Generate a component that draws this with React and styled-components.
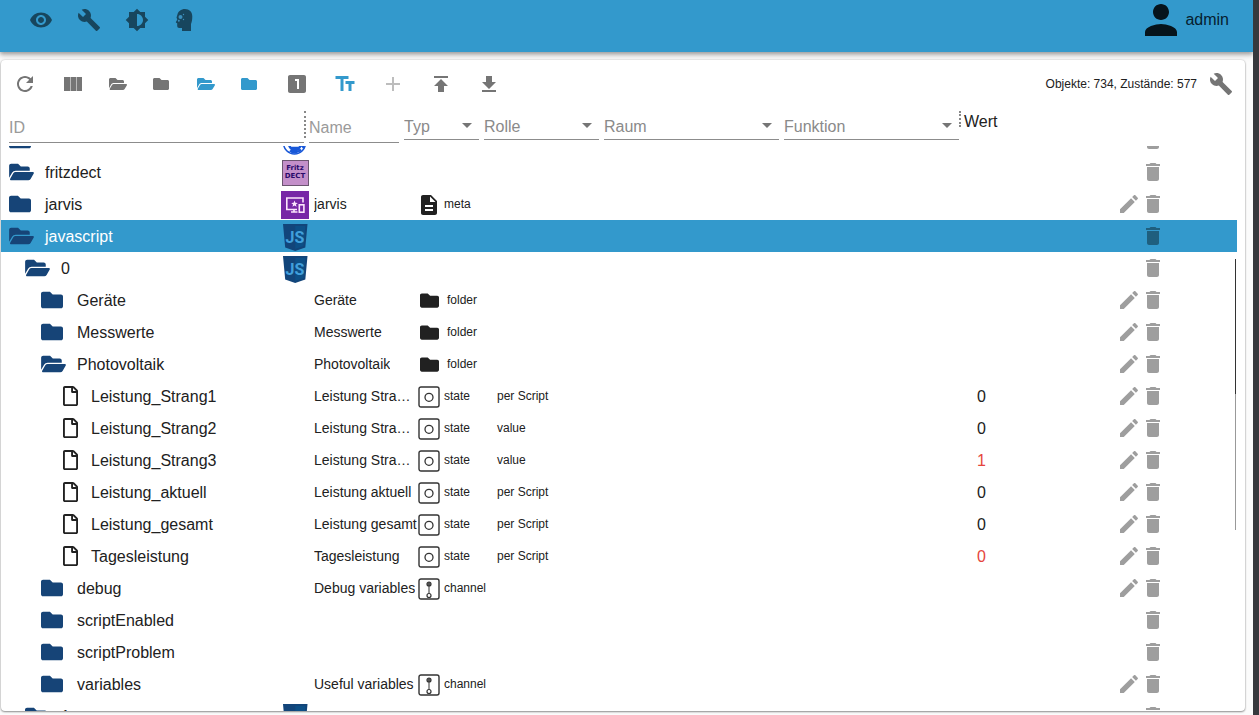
import React, { useLayoutEffect, useRef } from 'react'
import styled, { createGlobalStyle } from 'styled-components'

const GlobalStyle = createGlobalStyle`
* { box-sizing: border-box; }
body {
    margin: 0;
    background: #fbfbfb;
    color: #212121;
    font-family: "Liberation Sans", Arial, sans-serif;
}
`

const Page = styled.div`
display: flex;
height: 100vh;
overflow: hidden;
`

const Main = styled.div`
display: flex;
flex-direction: column;
flex: 1;
min-width: 0;
`

const Edge = styled.div`
width: 6px;
background: #37393d;
`

const Header = styled.header`
display: flex;
justify-content: space-between;
height: 52px;
padding: 0 24px 0 17px;
flex-shrink: 0;
background: #3399cc;
box-shadow: 0 2px 4px rgba(0, 0, 0, 0.3), 0 4px 6px rgba(0, 0, 0, 0.12);
`

const Icons = styled.div`
display: flex;
align-items: center;
height: 40px;
`

const User = styled.div`
display: flex;
align-items: center;
gap: 8px;
height: 40px;
font-size: 16px;
color: #06202f;

    svg {
        color: #06141c;
    }
`

const IconButton = styled.button`
display: flex;
align-items: center;
justify-content: ${(props) => (props.$narrow ? 'flex-start' : 'center')};
width: ${(props) => (props.$narrow ? 44 : 48)}px;
height: 40px;
padding: ${(props) => (props.$narrow ? '0 12px' : 0)};
border: none;
background: none;
color: ${(props) => props.$color || '#757575'};
cursor: pointer;
`

const Card = styled.section`
display: flex;
flex-direction: column;
flex: 1;
min-height: 0;
margin: 8px 8px 4px 1px;
overflow: hidden;
background: #fff;
border-radius: 4px;
box-shadow: 0 1px 2px rgba(0, 0, 0, 0.4), 0 0 2px rgba(0, 0, 0, 0.2);
`

const Toolbar = styled.div`
display: flex;
align-items: center;
justify-content: space-between;
height: 48px;
flex-shrink: 0;
`

const Counter = styled.span`
font-size: 12px;
`

const Table = styled.table`
position: relative;
display: flex;
flex-direction: column;
flex: 1;
min-height: 0;

    &::after {
        content: "";
        position: absolute;
        top: 25%;
        right: 9px;
        width: 1px;
        height: 45%;
        background: linear-gradient(#333 50%, #999 50%);
    }
`

const Head = styled.thead`
display: block;
`

const HeadRow = styled.tr`
display: grid;
grid-template-columns: 295px 90px 75px 115px 175px 175px 1fr;
gap: 5px;
height: 38px;
padding: 3px 8px 0;
`

const HeadCell = styled.th`
position: relative;
padding: ${(props) => (props.$label ? '2px 0 0' : 0)};
text-align: left;
font-weight: 400;
font-size: 16px;

    &::after {
        content: "";
        display: ${(props) => (props.$handle ? 'block' : 'none')};
        position: absolute;
        top: 0;
        right: -2px;
        height: ${(props) => props.$handle}px;
        border-right: 2px dotted #888;
    }
`

const TextFilter = styled.input`
display: block;
width: 100%;
height: 32px;
padding: 2px 0 0;
border: none;
border-bottom: 1px solid #8c8c8c;
border-radius: 0;
outline: none;
background: none;
font: inherit;

    &::placeholder {
        color: #9a9a9a;
        opacity: 1;
    }
`

const SelectFilter = styled.select`
display: block;
width: 100%;
height: 28px;
margin-top: 1px;
padding: 2px 0 0;
border: none;
border-bottom: 1px solid #8c8c8c;
border-radius: 0;
appearance: none;
background: none;
color: #8a8a8a;
font: inherit;
`

const Arrow = styled.svg`
position: absolute;
top: 12px;
right: 7px;
pointer-events: none;
`

const Body = styled.tbody`
display: block;
flex: 1;
min-height: 0;
margin-right: 8px;
overflow-y: auto;
scrollbar-width: none;
`

const Row = styled.tr`
display: grid;
grid-template-columns: 313px 104px 79px 120px 180px 180px 1fr 120px;
height: 32px;
background: ${(props) => (props.$selected ? '#3399cc' : 'transparent')};
color: ${(props) => (props.$selected ? '#fff' : 'inherit')};
`

const Cell = styled.td`
display: flex;
align-items: center;
min-width: 0;
padding: 0;
font-size: 12px;
`

const IdCell = styled(Cell)`
padding: 0 5px 0 ${(props) => 8 + props.$level * 16}px;
`

const NameCell = styled(Cell)`
font-size: 14px;
`

const ValueCell = styled(Cell)`
padding-top: 2px;
font-size: 16px;
color: ${(props) => (props.$alert ? '#e5453d' : 'inherit')};
`

const TreeIcon = styled.span`
display: flex;
width: ${(props) => (props.$file ? 34 : 36)}px;
padding-left: ${(props) => (props.$file ? 6 : 0)}px;
color: ${(props) => (props.$file ? '#212121' : '#164477')};
`

const IdText = styled.span`
flex: 1;
padding-top: 2px;
font-size: 16px;
`

const LogoBox = styled.span`
display: flex;
padding-top: 2px;
`

const NameText = styled.span`
overflow: hidden;
text-overflow: ellipsis;
white-space: nowrap;
`

const TypeIcon = styled.span`
display: flex;
width: ${(props) => (props.$folder ? 29 : 26)}px;
padding: ${(props) => (props.$folder ? '0 0 0 2px' : '2px 0 0')};
`

const ActionCell = styled(Cell)`
padding-left: ${(props) => (props.$edit ? 0 : 24)}px;
`

const ActionButton = styled.button`
display: flex;
padding: 0;
border: none;
background: none;
color: rgba(0, 0, 0, 0.38);
cursor: pointer;
`

const paths = {
    eye: 'M12 4.5C7 4.5 2.73 7.61 1 12c1.73 4.39 6 7.5 11 7.5s9.27-3.11 11-7.5c-1.73-4.39-6-7.5-11-7.5zM12 17c-2.76 0-5-2.24-5-5s2.24-5 5-5 5 2.24 5 5-2.24 5-5 5zm0-8c-1.66 0-3 1.34-3 3s1.34 3 3 3 3-1.34 3-3-1.34-3-3-3z',
    wrench: 'M22.7 19l-9.1-9.1c.9-2.3.4-5-1.5-6.9-2-2-5-2.4-7.4-1.3L9 6 6 9 1.6 4.7C.4 7.1.9 10.1 2.9 12.1c1.9 1.9 4.6 2.4 6.9 1.5l9.1 9.1c.4.4 1 .4 1.4 0l2.3-2.3c.5-.4.5-1.1.1-1.4z',
    brightness: 'M20 15.31L23.31 12 20 8.69V4h-4.69L12 .69 8.69 4H4v4.69L.69 12 4 15.31V20h4.69L12 23.31 15.31 20H20v-4.69zM12 18V6c3.31 0 6 2.69 6 6s-2.69 6-6 6z',
    person: 'M12 12c2.21 0 4-1.79 4-4s-1.79-4-4-4-4 1.79-4 4 1.79 4 4 4zm0 2c-2.67 0-8 1.34-8 4v2h16v-2c0-2.66-5.33-4-8-4z',
    refresh: 'M17.65 6.35C16.2 4.9 14.21 4 12 4c-4.42 0-7.99 3.58-7.99 8s3.57 8 7.99 8c3.73 0 6.84-2.55 7.73-6h-2.08c-.82 2.33-3.04 4-5.65 4-3.31 0-6-2.69-6-6s2.69-6 6-6c1.66 0 3.14.69 4.22 1.78L13 11h7V4l-2.35 2.35z',
    columns: 'M9 19h6V5H9.500v14zM3 19h6V5H3v14zM15.500 5v14H21V5h-5.500z',
    one: 'M19 3H5c-1.1 0-2 .9-2 2v14c0 1.1.9 2 2 2h14c1.1 0 2-.9 2-2V5c0-1.1-.9-2-2-2zm-5 14h-2V9h-2V7h4v10z',
    textFields: 'M2.5 4v3h5v12h3V7h5V4h-13zm19 5h-9v3h3v7h3v-7h3V9z',
    add: 'M19 13h-6v6h-2v-6H5v-2h6V5h2v6h6v2z',
    upload: 'M5 4v2h14V4H5zm0 10h4v6h6v-6h4l-7-7-7 7z',
    download: 'M19 10h-4V4H9v6H5l7 7 7-7zM5 18v2h14v-2H5z',
    meta: 'M14 2H6c-1.1 0-1.99.9-1.99 2L4 20c0 1.1.89 2 1.99 2H18c1.1 0 2-.9 2-2V8l-6-6zm2 16H8v-2h8v2zm0-4H8v-2h8v2zm-3-5V3.5L18.5 9H13z',
    edit: 'M3 17.25V21h3.75L17.81 9.94l-3.75-3.75L3 17.25zM20.71 7.04c.39-.39.39-1.02 0-1.41l-2.34-2.34c-.39-.39-1.02-.39-1.41 0l-1.83 1.83 3.75 3.75 1.83-1.83z',
    trash: 'M6 19c0 1.1.9 2 2 2h8c1.1 0 2-.9 2-2V7H6v12zM19 4h-3.5l-1-1h-5l-1 1H5v2h14V4z',
    file: 'M369.9 97.9L286 14C277 5 264.8 0 252.1 0H48C21.5 0 0 21.5 0 48v416c0 26.5 21.5 48 48 48h288c26.5 0 48-21.5 48-48V131.9c0-12.700-5.100-25-14.100-34zM332.100 128H256V51.900l76.100 76.100zM48 464V48h160v104c0 13.300 10.700 24 24 24h104v288H48z',
    folderOpen: 'M572.694 292.093L500.27 416.248A63.997 63.997 0 0 1 444.989 448H45.025c-18.523 0-30.064-20.093-20.731-36.093l72.424-124.155A64 64 0 0 1 152 256h399.964c18.523 0 30.064 20.093 20.73 36.093zM152 224h328v-48c0-26.51-21.49-48-48-48H272l-64-64H48C21.49 64 0 85.49 0 112v278.046l69.077-118.418C86.214 242.25 117.989 224 152 224z',
    folder: 'M464 128H272l-64-64H48C21.49 64 0 85.49 0 112v288c0 26.51 21.49 48 48 48h416c26.51 0 48-21.49 48-48V176c0-26.51-21.49-48-48-48z',
}

const Icon = ({ name, size = 24, viewBox = '0 0 24 24' }) => (
    <svg width={size} height={size} viewBox={viewBox} fill="currentColor">
        <path d={paths[name]} />
    </svg>
)

const FileIcon = () => (
    <svg width="15" height="20" viewBox="0 0 384 512" fill="currentColor">
        <path d={paths.file} />
    </svg>
)

const FolderIcon = ({ open, height }) => {
    const units = open ? 576 : 512
    return (
        <svg
            width={Math.round((height * units) / 512)}
            height={height}
            viewBox={`0 0 ${units} 512`}
            fill="currentColor"
        >
            <path d={open ? paths.folderOpen : paths.folder} />
        </svg>
    )
}

const ExpertIcon = () => (
    <svg width="24" height="24" viewBox="0 0 24 24">
        <path fill="currentColor" d="M12 1C8 1 5 3.400 4.300 7L3.500 9.500l.8 2-1.300 2.300c-.4.600 0 1.100.6 1.200l.6.2V18c0 1.300.8 2 1.900 2H9v3h9v-7c.8-2 1.300-4.500 1.300-7.500 0-4.700-3-7.500-7.300-7.500z" />
        <circle cx="7.500" cy="9" r="2" fill="#3c8fbd" />
        <circle cx="5.800" cy="12.800" r="1" fill="#3c8fbd" />
        <circle cx="10.500" cy="6.500" r=".7" fill="#3c8fbd" />
        <circle cx="10.500" cy="11.500" r=".7" fill="#3c8fbd" />
    </svg>
)

const JsLogo = () => (
    <svg width="28" height="28" viewBox="0 0 28 28">
        <path d="M2 1h24.500l-2.200 23.500L14.200 28 4.200 24.500z" fill="#12457a" />
        <path d="M14.200 3h10.200l-1.900 20-8.300 2.900z" fill="#0d4f86" />
        <text x="14" y="20" textAnchor="middle" fontFamily="Roboto, sans-serif" fontWeight="700" fontSize="16" fill="#42a0dc">JS</text>
    </svg>
)

const FritzLogo = () => (
    <svg width="28" height="28" viewBox="0 0 28 28">
        <rect x="1.500" y="1.500" width="26" height="25" fill="#c38fc9" stroke="#6b5570" />
        <g fontFamily="DejaVu Sans, sans-serif" fontWeight="700" fontSize="7" fill="#2b0a6b" textAnchor="middle">
            <text x="14" y="11">Fritz</text>
            <text x="14" y="19">DECT</text>
        </g>
    </svg>
)

const JarvisLogo = () => (
    <svg width="28" height="28" viewBox="0 0 28 28">
        <rect width="28" height="28" fill="#7726a6" />
        <g fill="none" stroke="#fbe4fb" strokeWidth="1.600">
            <path d="M22 11.500V7H5.800v11.500H16" />
            <path d="M13 18.500v2.500M10 21h6.500" />
            <rect x="18.300" y="13.800" width="4.600" height="7.400" />
        </g>
        <path d="M13.500 9.500l.9 2.300 2.400.1-1.900 1.500.7 2.300-2.100-1.300-2.100 1.300.7-2.300-1.900-1.500 2.400-.1z" fill="#fbe4fb" />
    </svg>
)

const GlobeLogo = () => (
    <svg width="28" height="28" viewBox="0 0 28 28" fill="none" stroke="#1757d8">
        <circle cx="13.500" cy="16" r="11" strokeWidth="1.500" />
        <path d="M8 18c2 6 9 7 12 0M10 21h8M9 23.500c3 3 8 2 11-1M20 17l3 4" strokeWidth="2.400" />
    </svg>
)

const logos = { js: JsLogo, fritz: FritzLogo, jarvis: JarvisLogo, globe: GlobeLogo }

const StateIcon = () => (
    <svg width="22" height="22" viewBox="0 0 22 22" fill="none" stroke="#333">
        <rect x="1" y="1" width="20" height="20" rx="2" strokeWidth="1.400" />
        <circle cx="11" cy="11.300" r="4" strokeWidth="1.300" />
    </svg>
)

const ChannelIcon = () => (
    <svg width="22" height="22" viewBox="0 0 22 22" fill="none" stroke="#333">
        <rect x="1" y="1" width="20" height="20" rx="2" strokeWidth="1.400" />
        <circle cx="11" cy="6" r="2" fill="#777" strokeWidth="1.200" />
        <circle cx="11" cy="17.500" r="2" strokeWidth="1.200" />
        <path d="M11 4v11.500" />
    </svg>
)

const Type = ({ type }) => (
    <>
        <TypeIcon $folder={type === 'folder'}>
            {type === 'folder' && <FolderIcon height={19} />}
            {type === 'meta' && <Icon name="meta" size={22} viewBox="1 1 22 22" />}
            {type === 'state' && <StateIcon />}
            {type === 'channel' && <ChannelIcon />}
        </TypeIcon>
        {type}
    </>
)

const objects = [
    { id: '', level: 0, logo: 'globe' },
    { id: 'fritzdect', level: 0, open: true, logo: 'fritz' },
    { id: 'jarvis', level: 0, logo: 'jarvis', name: 'jarvis', type: 'meta', edit: true },
    { id: 'javascript', level: 0, open: true, logo: 'js', selected: true },
    { id: '0', level: 1, open: true, logo: 'js' },
    { id: 'Geräte', level: 2, name: 'Geräte', type: 'folder', edit: true },
    { id: 'Messwerte', level: 2, name: 'Messwerte', type: 'folder', edit: true },
    { id: 'Photovoltaik', level: 2, open: true, name: 'Photovoltaik', type: 'folder', edit: true },
    { id: 'Leistung_Strang1', level: 3, name: 'Leistung Strang1', type: 'state', role: 'per Script', value: '0', edit: true },
    { id: 'Leistung_Strang2', level: 3, name: 'Leistung Strang2', type: 'state', role: 'value', value: '0', edit: true },
    { id: 'Leistung_Strang3', level: 3, name: 'Leistung Strang3', type: 'state', role: 'value', value: '1', alert: true, edit: true },
    { id: 'Leistung_aktuell', level: 3, name: 'Leistung aktuell', type: 'state', role: 'per Script', value: '0', edit: true },
    { id: 'Leistung_gesamt', level: 3, name: 'Leistung gesamt', type: 'state', role: 'per Script', value: '0', edit: true },
    { id: 'Tagesleistung', level: 3, name: 'Tagesleistung', type: 'state', role: 'per Script', value: '0', alert: true, edit: true },
    { id: 'debug', level: 2, name: 'Debug variables', type: 'channel', edit: true },
    { id: 'scriptEnabled', level: 2 },
    { id: 'scriptProblem', level: 2 },
    { id: 'variables', level: 2, name: 'Useful variables', type: 'channel', edit: true },
    { id: '1', level: 1, logo: 'js' },
]

const ObjectRow = ({ object }) => {
    const Logo = logos[object.logo]
    const isFile = object.type === 'state'
    return (
        <Row $selected={object.selected}>
            <IdCell $level={object.level}>
                <TreeIcon $file={isFile}>
                    {isFile ? <FileIcon /> : <FolderIcon open={object.open} height={22} />}
                </TreeIcon>
                <IdText>{object.id}</IdText>
                {Logo && <LogoBox><Logo /></LogoBox>}
            </IdCell>
            <NameCell><NameText>{object.name}</NameText></NameCell>
            <Cell>{object.type && <Type type={object.type} />}</Cell>
            <Cell>{object.role}</Cell>
            <Cell />
            <Cell />
            <ValueCell $alert={object.alert}>{object.value}</ValueCell>
            <ActionCell $edit={object.edit}>
                {object.edit && <ActionButton aria-label="Bearbeiten"><Icon name="edit" /></ActionButton>}
                <ActionButton aria-label="Löschen"><Icon name="trash" /></ActionButton>
            </ActionCell>
        </Row>
    )
}

const Filter = ({ label, handle }) => (
    <HeadCell $handle={handle}>
        <SelectFilter aria-label={label}>
            <option>{label}</option>
        </SelectFilter>
        <Arrow width="10" height="5" viewBox="0 0 10 5"><path d="M0 0h10L5 5z" fill="#757575" /></Arrow>
    </HeadCell>
)

const BLUE = '#3399cc'
const DARK = 'rgba(0, 0, 0, 0.54)'

const App = () => {
    const body = useRef(null)

    useLayoutEffect(() => {
        body.current.scrollTop = 22
    }, [])

    return (
        <Page>
            <GlobalStyle />
            <Main>
                <Header>
                    <Icons>
                        <IconButton $color={DARK} aria-label="Ansicht"><Icon name="eye" /></IconButton>
                        <IconButton $color={DARK} aria-label="Einstellungen"><Icon name="wrench" /></IconButton>
                        <IconButton $color={DARK} aria-label="Farbschema"><Icon name="brightness" /></IconButton>
                        <IconButton $color={DARK} aria-label="Expertenmodus"><ExpertIcon /></IconButton>
                    </Icons>
                    <User>
                        <Icon name="person" size={32} viewBox="4 4 16 16" />
                        admin
                    </User>
                </Header>
                <Card>
                    <Toolbar>
                        <Icons>
                            <IconButton aria-label="Aktualisieren"><Icon name="refresh" /></IconButton>
                            <IconButton aria-label="Spalten"><Icon name="columns" /></IconButton>
                            <IconButton $narrow aria-label="Alle aufklappen"><FolderIcon open height={16} /></IconButton>
                            <IconButton $narrow aria-label="Alle zuklappen"><FolderIcon height={16} /></IconButton>
                            <IconButton $narrow $color={BLUE} aria-label="Eine Ebene aufklappen"><FolderIcon open height={16} /></IconButton>
                            <IconButton $narrow $color={BLUE} aria-label="Eine Ebene zuklappen"><FolderIcon height={16} /></IconButton>
                            <IconButton aria-label="Zustände anzeigen"><Icon name="one" /></IconButton>
                            <IconButton $color={BLUE} aria-label="Beschreibungen"><Icon name="textFields" /></IconButton>
                            <IconButton $color="#bdbdbd" aria-label="Hinzufügen"><Icon name="add" /></IconButton>
                            <IconButton aria-label="Hochladen"><Icon name="upload" /></IconButton>
                            <IconButton aria-label="Herunterladen"><Icon name="download" /></IconButton>
                        </Icons>
                        <Icons>
                            <Counter>Objekte: 734, Zustände: 577</Counter>
                            <IconButton aria-label="Konfigurieren"><Icon name="wrench" /></IconButton>
                        </Icons>
                    </Toolbar>
                    <Table>
                        <Head>
                            <HeadRow>
                                <HeadCell $handle={27}><TextFilter placeholder="ID" aria-label="ID" /></HeadCell>
                                <HeadCell><TextFilter placeholder="Name" aria-label="Name" /></HeadCell>
                                <Filter label="Typ" />
                                <Filter label="Rolle" />
                                <Filter label="Raum" />
                                <Filter label="Funktion" handle={16} />
                                <HeadCell $label>Wert</HeadCell>
                            </HeadRow>
                        </Head>
                        <Body ref={body}>
                            {objects.map((object, index) => (
                                <ObjectRow key={index} object={object} />
                            ))}
                        </Body>
                    </Table>
                </Card>
            </Main>
            <Edge />
        </Page>
    )
}

export default App
